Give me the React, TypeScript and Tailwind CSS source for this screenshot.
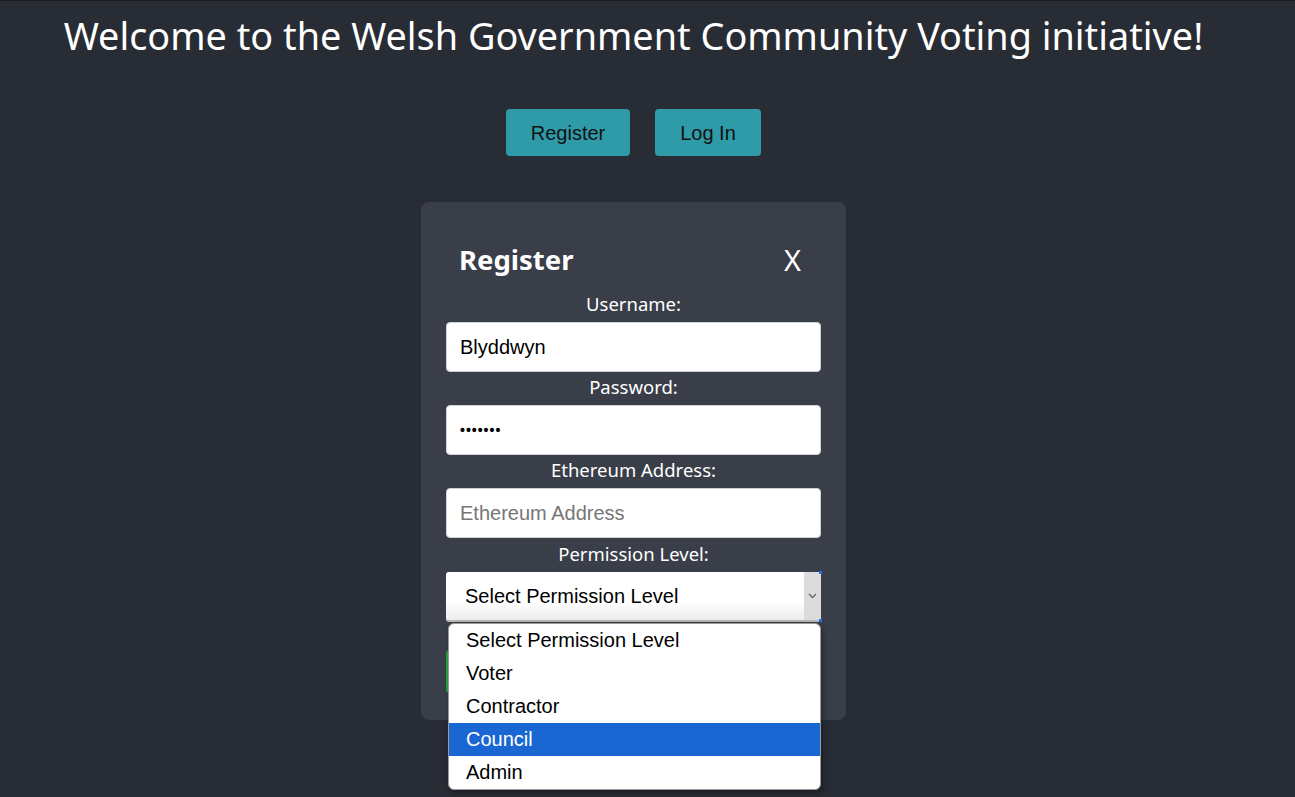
import React from "react";

const seg = { fontFamily: '"Noto Sans", "Open Sans", sans-serif' };
const ari = { fontFamily: '"Liberation Sans", Arial, sans-serif' };

function Label({ children, h = 33 }: { children: React.ReactNode; h?: number }) {
  return (
    <div
      className={(h === 34 ? "h-[34px]" : "h-[33px]") + " flex items-center justify-center pb-[3px] text-[18.5px] text-white"}
      style={seg}
    >
      {children}
    </div>
  );
}

function Input({ value, placeholder, password }: { value?: string; placeholder?: string; password?: boolean }) {
  return (
    <div
      className="h-[50px] w-[375px] rounded-[4px] bg-white border border-[#cfd3d8] flex items-center pl-[13px] text-[20px]"
      style={ari}
    >
      {password ? (
        <span className="text-black tracking-[1px] text-[14px] font-bold">•••••••</span>
      ) : value ? (
        <span className="text-black">{value}</span>
      ) : (
        <span className="text-[#767676]">{placeholder}</span>
      )}
    </div>
  );
}

export default function App() {
  const options = ["Select Permission Level", "Voter", "Contractor", "Council", "Admin"];
  return (
    <div className="w-[1295px] h-[797px] bg-[#282c34] border-t border-[#1c1d22] overflow-hidden">
      <div className="w-[1267px] flex flex-col items-center">
        <h1 className="mt-[10px] text-[37.8px] text-white leading-[50px] whitespace-nowrap" style={seg}>
          Welcome to the Welsh Government Community Voting initiative!
        </h1>
        <div className="mt-[48px] flex gap-[25px]">
          <button className="h-[47px] w-[124px] rounded-[4px] bg-[#2f9aa8] text-[20px] text-[#111]" style={ari}>
            Register
          </button>
          <button className="h-[47px] w-[106px] rounded-[4px] bg-[#2f9aa8] text-[20px] text-[#111]" style={ari}>
            Log In
          </button>
        </div>
        <div className="relative mt-[46px] w-[425px] rounded-[8px] bg-[#3a3e48] px-[25px] pt-[38px] pb-[27px]">
          <div className="h-[40px] flex items-center justify-between pl-[13px] pr-[20px]">
            <span className="text-[27.5px] font-bold text-white" style={seg}>
              Register
            </span>
            <span className="text-[29px] text-white" style={seg}>
              X
            </span>
          </div>
          <div className="h-[9px]" />
          <Label>Username:</Label>
          <Input value="Blyddwyn" />
          <Label>Password:</Label>
          <Input password />
          <Label>Ethereum Address:</Label>
          <Input placeholder="Ethereum Address" />
          <Label h={34}>Permission Level:</Label>
          <div className="relative h-[50px] w-[375px] rounded-[3px] bg-gradient-to-b from-white from-60% to-[#ececec] border-b-2 border-[#b8b8b8] flex items-center">
            <span className="pl-[19px] text-[20px] text-black" style={ari}>
              Select Permission Level
            </span>
            <div className="absolute right-0 top-0 h-full w-[17px] bg-[#dcdcdc] flex items-center justify-center">
              <svg width="9" height="6" viewBox="0 0 9 6">
                <path d="M1 1 L4.5 4.5 L8 1" stroke="#666" strokeWidth="1.3" fill="none" />
              </svg>
            </div>
            <div className="absolute -right-[1px] -top-[1px] w-[3px] h-[3px] bg-[#1a73e8]" />
            <div className="absolute -right-[1px] -bottom-[2px] w-[3px] h-[3px] bg-[#1a73e8]" />
          </div>
          <div className="mt-[28px] h-[43px] w-[120px] rounded-[4px] bg-[#28a745]" />
          <div
            className="absolute left-[27px] top-[421px] w-[373px] rounded-[6px] bg-white border border-[#9a9a9a] shadow-[2px_3px_6px_rgba(0,0,0,0.35)] overflow-hidden"
            style={ari}
          >
            {options.map((o) => (
              <div
                key={o}
                className={
                  o === "Council"
                    ? "h-[33px] flex items-center pl-[17px] pb-[1px] text-[20px] bg-[#1a66d2] text-white"
                    : "h-[33px] flex items-center pl-[17px] pb-[1px] text-[20px] text-black"
                }
              >
                {o}
              </div>
            ))}
          </div>
        </div>
      </div>
    </div>
  );
}
